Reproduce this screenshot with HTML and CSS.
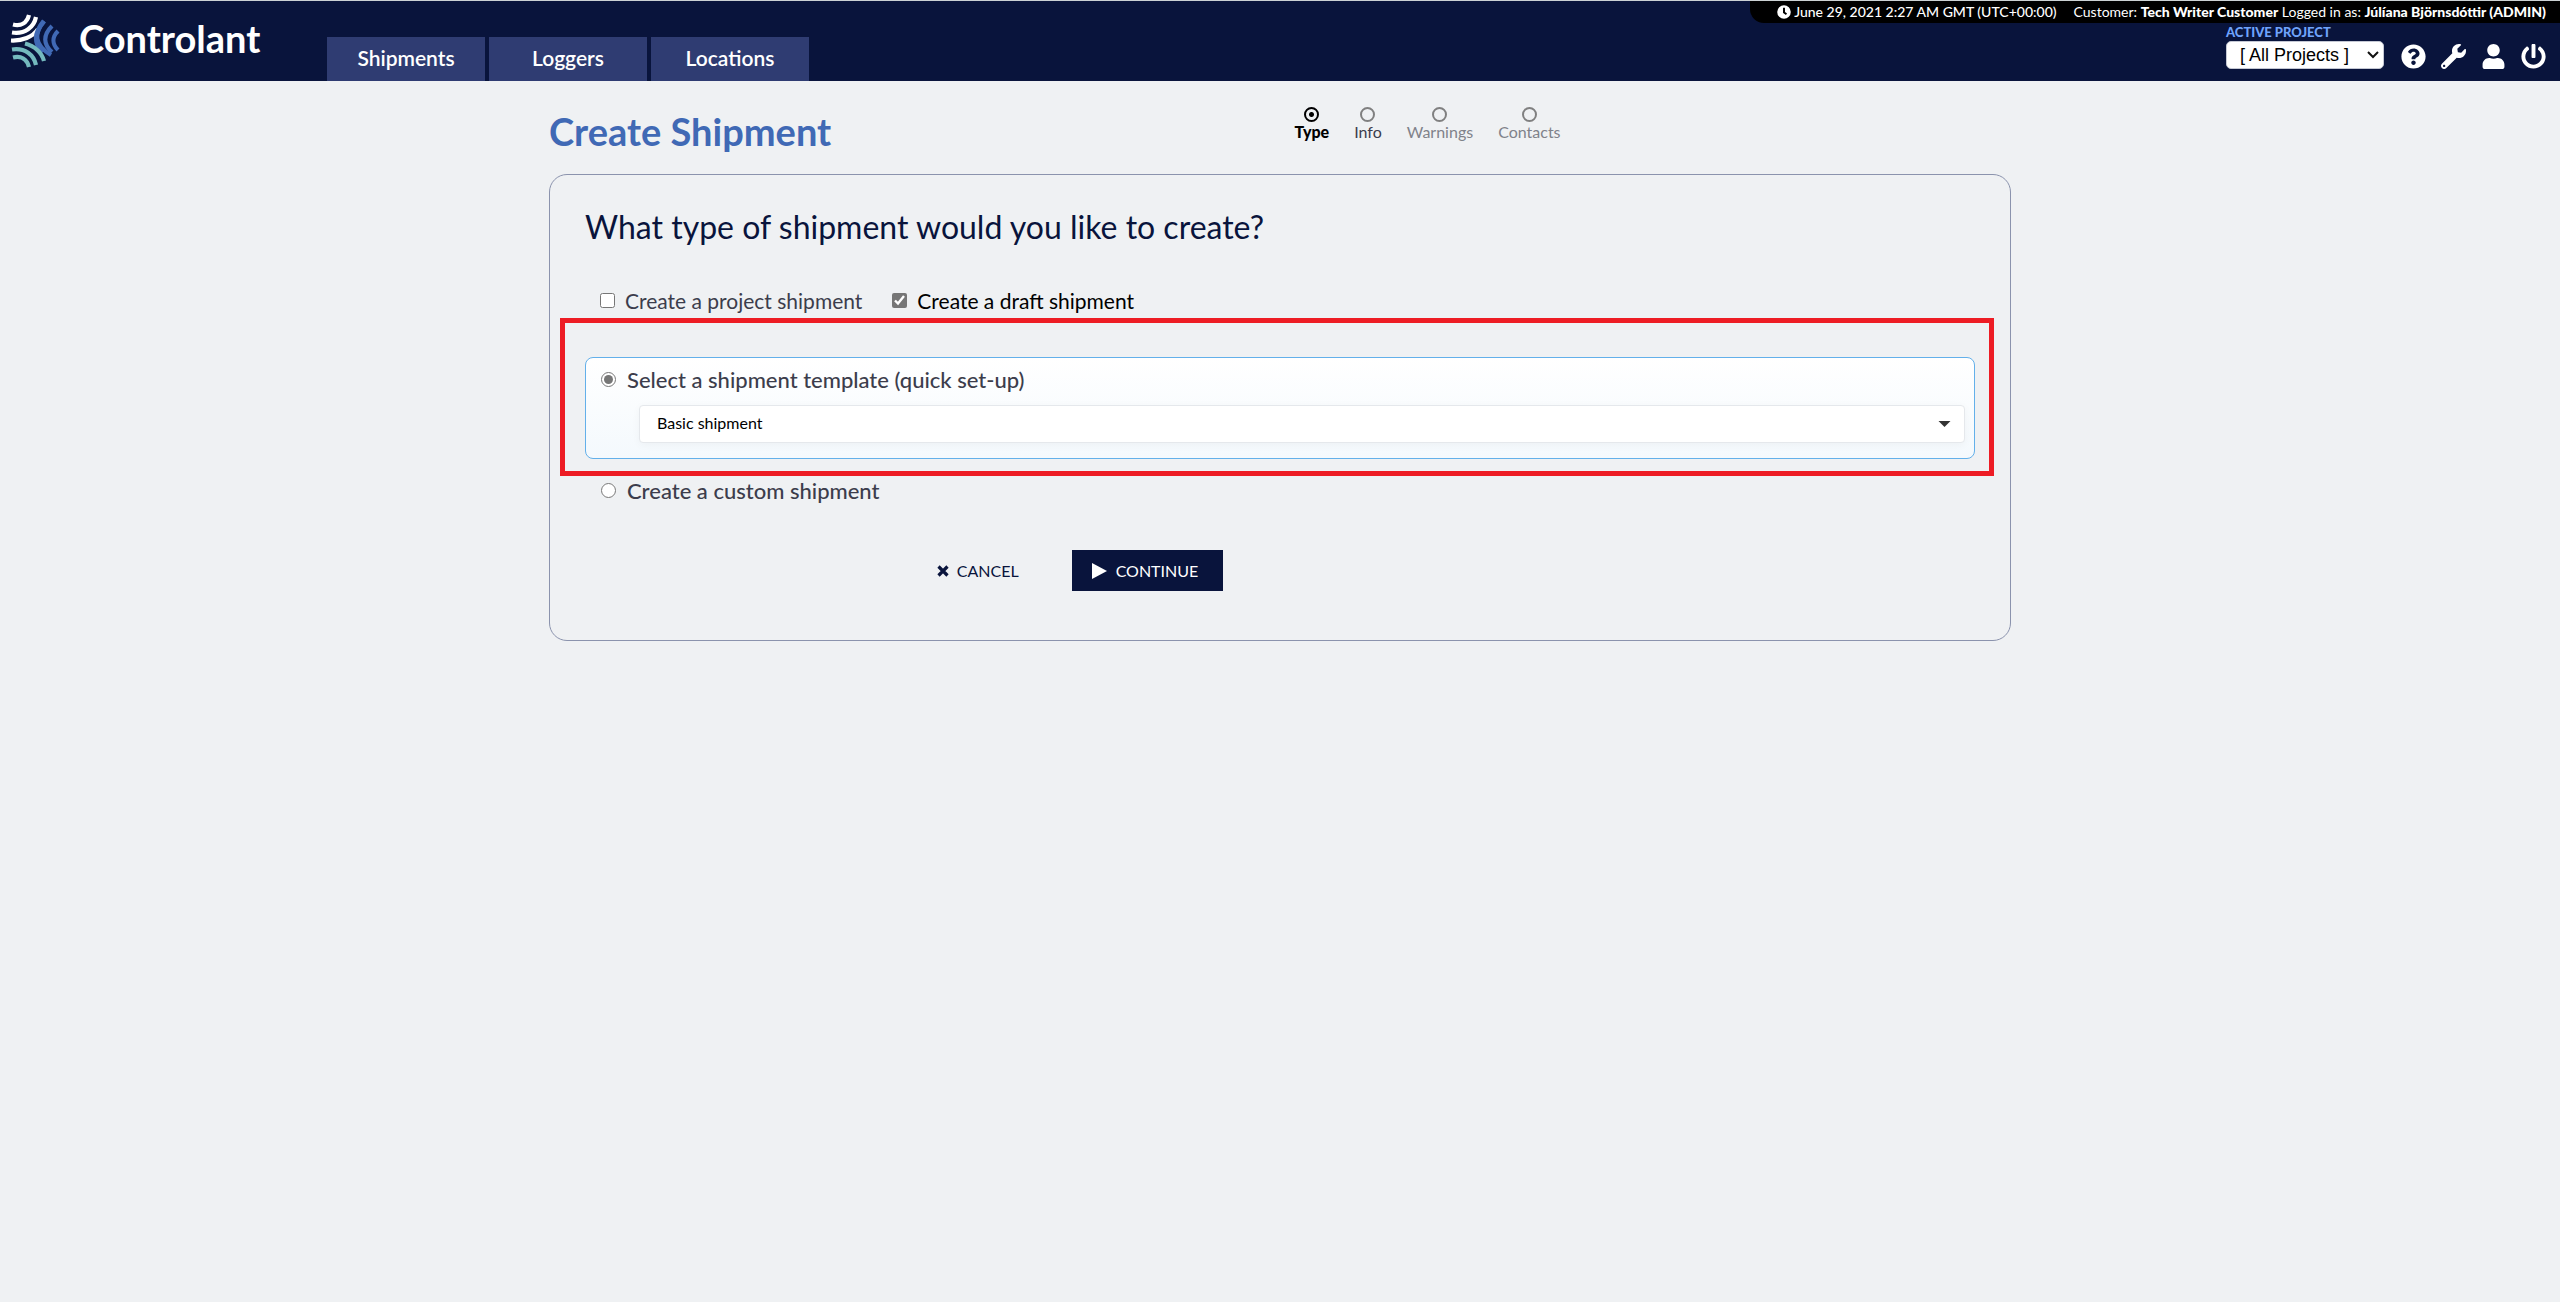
FILE: index.html
```html
<!DOCTYPE html>
<html lang="en">
<head>
<meta charset="utf-8">
<title>Create Shipment</title>
<link rel="stylesheet" href="styles.css">
</head>
<body>
<header class="topbar">
  <a class="brand" href="#">
    <svg class="brand-mark" viewBox="0 0 50 54" aria-hidden="true">
      <g fill="none" stroke-width="4.2">
        <g stroke="#fff">
          <path d="M3 10.500C11 12.500 17 9 19 1"/>
          <path d="M2 18.500C15 20.500 24 13 26 3"/>
          <path d="M1 26.500C12 27 23 23 28 15"/>
        </g>
        <g stroke="#4069b5">
          <path d="M34 7C24 19 24 30 33 38" stroke-width="5"/>
          <path d="M34 7C24 19 24 31 41 41"/>
          <path d="M42 12C33 21 33 30 42 38"/>
          <path d="M48 17C42 23 42 30 48 36"/>
        </g>
        <g stroke="#74b9be">
          <path d="M3 43.500C11 41.500 17 45 19 53"/>
          <path d="M2 35.500C15 33.500 24 41 26 51"/>
          <path d="M15 29.500C25 32 32 39 34 47"/>
        </g>
      </g>
    </svg>
    <span>Controlant</span>
  </a>
  <nav class="tabs">
    <a href="#">Shipments</a>
    <a href="#">Loggers</a>
    <a href="#">Locations</a>
  </nav>
  <div class="account">
    <div class="status">
      <span class="clock"><svg viewBox="0 0 512 512" aria-hidden="true"><path fill="currentColor" d="M256 8a248 248 0 1 0 0 496 248 248 0 0 0 0-496zm57 350-88-64c-3-2-5-6-5-10V116c0-7 5-12 12-12h48c7 0 12 5 12 12v138l66 48c5 4 6 11 2 17l-28 38c-4 5-12 6-19 1z"/></svg>June 29, 2021 2:27 AM GMT (UTC+00:00)</span>
      <span>Customer: <b>Tech Writer Customer</b> Logged in as: <b>Júlíana Björnsdóttir (ADMIN)</b></span>
    </div>
    <div class="tools">
      <div class="project">
        <label for="project">ACTIVE PROJECT</label>
        <div class="project-box">
          <select id="project"><option>[ All Projects ]</option></select>
          <svg viewBox="0 0 12 8" aria-hidden="true"><path d="M1 1l5 5 5-5" fill="none" stroke="#111" stroke-width="2"/></svg>
        </div>
      </div>
      <a href="#" aria-label="Help"><svg viewBox="0 0 512 512"><path fill="currentColor" d="M504 256c0 137-111 248-248 248S8 393 8 256C8 119.100 119 8 256 8s248 111.100 248 248zM262.700 90c-54.500 0-89.300 23-116.500 63.800-3.500 5.300-2.400 12.400 2.700 16.300l34.700 26.300c5.200 3.900 12.600 3 16.700-2.100 17.900-22.700 30.100-35.800 57.300-35.800 20.400 0 45.700 13.100 45.700 33 0 15-12.400 22.700-32.500 34C247.100 238.500 216 254.900 216 296v4c0 6.600 5.400 12 12 12h56c6.600 0 12-5.400 12-12v-1.300c0-28.500 83.200-29.600 83.200-106.700 0-58-60.200-102-116.500-102zM256 338c-25.400 0-46 20.600-46 46s20.600 46 46 46 46-20.600 46-46-20.600-46-46-46z"/></svg></a>
      <a href="#" aria-label="Settings"><svg viewBox="0 0 512 512"><path fill="currentColor" d="M507.700 109.100c-2.200-9-13.500-12.100-20.100-5.500l-74.400 74.400-67.900-11.300L334 98.800l74.400-74.400c6.600-6.600 3.400-17.900-5.700-20.200-47.400-11.700-99.600.9-136.600 37.900-39.600 39.600-50.500 97.100-34.100 147.200L18.700 402.800c-25 25-25 65.500 0 90.500s65.500 25 90.500 0l213.200-213.200c50.100 16.700 107.500 5.700 147.400-34.200 37.100-37.100 49.700-89.300 37.900-136.800zM64 472c-13.200 0-24-10.800-24-24 0-13.300 10.700-24 24-24s24 10.700 24 24c0 13.200-10.700 24-24 24z"/></svg></a>
      <a href="#" aria-label="Profile"><svg viewBox="-32 0 512 512"><path fill="currentColor" d="M224 256c70.700 0 128-57.300 128-128S294.700 0 224 0 96 57.300 96 128s57.300 128 128 128zm89.600 32h-16.700c-22.200 10.200-46.900 16-72.900 16s-50.600-5.800-72.900-16h-16.700C60.200 288 0 348.200 0 422.400V464c0 26.500 21.500 48 48 48h352c26.500 0 48-21.500 48-48v-41.600c0-74.200-60.200-134.400-134.400-134.400z"/></svg></a>
      <a href="#" aria-label="Log out"><svg viewBox="0 0 512 512"><path fill="currentColor" d="M400 54.100c63 45 104 118.600 104 201.900 0 136.800-110.800 247.700-247.500 248C120 504.300 8.200 393 8 256.400 7.900 173.100 48.900 99.300 111.800 54.200c11.700-8.300 28-4.800 35 7.700L162.600 90c5.900 10.500 3.100 23.800-6.600 31-41.500 30.800-68 79.600-68 134.900-.1 92.300 74.500 168.100 168 168.100 91.600 0 168.600-74.200 168-169.100-.3-51.800-24.700-101.800-68.100-134-9.700-7.200-12.400-20.500-6.500-30.900l15.800-28.100c7-12.400 23.200-16.100 34.800-7.800zM296 264V24c0-13.300-10.700-24-24-24h-32c-13.300 0-24 10.700-24 24v240c0 13.300 10.700 24 24 24h32c13.300 0 24-10.700 24-24z"/></svg></a>
    </div>
  </div>
</header>
<main class="page">
  <div class="page-head">
    <h1>Create Shipment</h1>
    <ol class="steps">
      <li class="current"><i></i>Type</li>
      <li class="next"><i></i>Info</li>
      <li><i></i>Warnings</li>
      <li><i></i>Contacts</li>
    </ol>
  </div>
  <form class="card">
    <h2>What type of shipment would you like to create?</h2>
    <div class="checks">
      <label><input type="checkbox">Create a project shipment</label>
      <label class="on"><input type="checkbox" checked>Create a draft shipment</label>
    </div>
    <div class="highlight">
      <div class="template">
        <label class="choice"><input type="radio" name="kind" checked>Select a shipment template (quick set-up)</label>
        <div class="template-box">
          <select aria-label="Shipment template"><option>Basic shipment</option></select>
          <svg viewBox="0 0 14 7" aria-hidden="true"><path d="M0 0h14L7 7z" fill="#333"/></svg>
        </div>
      </div>
    </div>
    <label class="choice custom"><input type="radio" name="kind">Create a custom shipment</label>
    <div class="actions">
      <button type="button" class="cancel"><svg viewBox="0 0 12 12" aria-hidden="true"><path d="M1.500 1.500l9 9M10.500 1.500l-9 9" stroke="currentColor" stroke-width="3.200"/></svg>CANCEL</button>
      <button type="button" class="continue"><svg viewBox="0 0 16 16" aria-hidden="true"><path d="M0 0l15 8-15 8z" fill="currentColor"/></svg>CONTINUE</button>
    </div>
  </form>
</main>
</body>
</html>
```
FILE: styles.css
```css
* { box-sizing: border-box; }
body {
  margin: 0;
  background: #eff1f3;
  color: #3c3d4c;
  font-family: Lato, "Open Sans", sans-serif;
}
h1, h2, ol { margin: 0; padding: 0; font-size: inherit; }
a { color: inherit; text-decoration: none; }
svg { display: block; flex: none; }
select { appearance: none; color: #000; background: #fff; }
input { width: 15px; height: 15px; margin: 0; accent-color: #767676; }

.topbar {
  display: flex;
  align-items: flex-end;
  height: 81px;
  border-top: 1px solid #ccd2d4;
  background: #09143c;
  color: #fff;
}
.brand {
  display: flex;
  align-items: flex-start;
  align-self: flex-start;
  gap: 19px;
  width: 327px;
  padding: 13px 0 0 10px;
  font-size: 38px;
  font-weight: 700;
  line-height: 48px;
}
.brand-mark { width: 50px; height: 54px; }
.tabs { display: flex; gap: 4px; }
.tabs a {
  width: 158px;
  font-size: 21px;
  font-weight: 600;
  line-height: 42px;
  padding-bottom: 2px;
  text-align: center;
  background: #2f3c72;
}
.account {
  display: flex;
  flex-direction: column;
  align-items: flex-end;
  align-self: flex-start;
  margin-left: auto;
}
.status {
  display: flex;
  gap: 17px;
  padding: 0 14px 0 27px;
  border-bottom-left-radius: 14px;
  background: #000;
  font-size: 14px;
  line-height: 22px;
  white-space: nowrap;
}
.status b { font-weight: 900; }
.clock { display: flex; align-items: center; gap: 3px; font-weight: 500; }
.clock svg { width: 14px; height: 14px; }
.tools { display: flex; align-items: flex-end; gap: 15px; padding-right: 14px; }
.tools svg { width: 25px; height: 25px; }
.project { margin-right: 2px; }
.project label {
  display: block;
  font-size: 13px;
  font-weight: 900;
  line-height: 18px;
  color: #6fa3fb;
}
.project-box { position: relative; }
.project select {
  display: block;
  width: 158px;
  height: 28px;
  padding: 0 13px;
  border: 1px solid #c4c8d4;
  border-radius: 5px;
  font: 18px "Liberation Sans", Arial, sans-serif;
}
.project-box svg { position: absolute; right: 5px; top: 10px; width: 12px; height: 8px; }

.page { width: calc(100% - 32px); max-width: 1462px; margin: 0 auto; }
.page-head {
  display: grid;
  grid-template-columns: 51% auto;
  justify-content: start;
  height: 93px;
  padding-top: 26px;
}
h1 { font-size: 38px; font-weight: 700; line-height: 48px; color: #4069b5; }
.steps { display: flex; gap: 25px; list-style: none; font-size: 16px; line-height: 20px; color: #80828a; }
.steps li { display: flex; flex-direction: column; align-items: center; }
.steps i { width: 15px; height: 15px; border: 2px solid #808080; border-radius: 50%; }
.steps .current { font-weight: 900; color: #000; }
.steps .current i { border-color: #000; background: radial-gradient(circle, #000 2px, transparent 3px); }
.steps .next { color: #3c3d4c; }

.card {
  padding: 32px 16px 49px 10px;
  border: 1px solid #8b93ad;
  border-radius: 18px;
}
h2 { padding-left: 25px; font-size: 32px; font-weight: 400; line-height: 40px; color: #09143c; }
.checks { display: flex; gap: 30px; padding: 42px 0 5px 40px; font-size: 21px; line-height: 24px; }
.checks label { display: flex; gap: 10px; }
.checks input { margin-top: 4px; }
.checks .on { color: #000; }
.highlight { padding: 34px 14px 12px 20px; border: 5px solid #ed1c24; }
.template {
  padding: 9px 9px 15px 15px;
  border: 1px solid #63b0ea;
  border-radius: 8px;
  background: linear-gradient(#fff, #f4f9fd);
}
.choice { display: flex; gap: 11px; font-size: 22px; font-weight: 500; line-height: 26px; }
.choice input { margin-top: 5px; }
.template-box { position: relative; margin: 12px 0 0 38px; }
.template select {
  display: block;
  width: 100%;
  height: 38px;
  padding: 0 17px 4px;
  border: 1px solid #e5e8ec;
  border-radius: 4px;
  box-shadow: 0 2px 8px #0000000a;
  font: 16px Lato, "Open Sans", sans-serif;
}
.template-box svg { position: absolute; right: 14px; top: 16px; width: 13px; height: 6px; }
.custom { padding: 2px 0 0 41px; }
.actions { display: flex; gap: 53px; justify-content: center; padding: 46px 164px 0 0; margin-right: 230px; }
button { display: flex; align-items: center; height: 41px; border: 0; background: none; font: 16px Lato, "Open Sans", sans-serif; color: #09143c; }
.cancel { gap: 8px; padding: 0; }
.cancel svg { width: 12px; height: 12px; }
.continue { gap: 8px; padding: 0 25px 0 20px; background: #09143c; color: #fff; }
.continue svg { width: 16px; height: 16px; }
```
